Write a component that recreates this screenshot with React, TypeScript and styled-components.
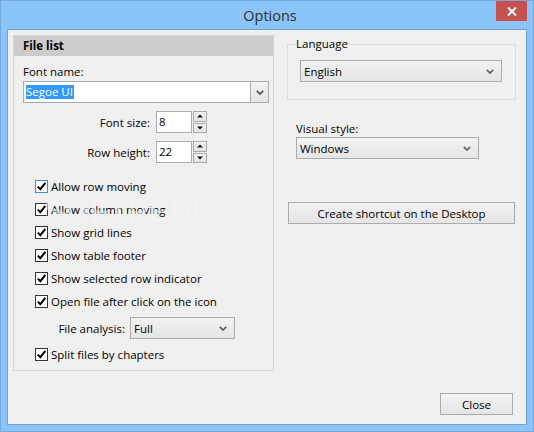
import React from 'react'
import styled, { createGlobalStyle } from 'styled-components'

const GlobalStyle = createGlobalStyle`
  html, body {
    margin: 0;
    padding: 0;
    background: #8bc5f7;
  }
  body {
    font-family: "Segoe UI", "Open Sans", "Noto Sans", sans-serif;
    font-size: 11.5px;
    color: #000;
  }
  * {
    box-sizing: border-box;
  }
`

const Window = styled.div`
  width: 534px;
  height: 432px;
  background: #8bc5f7;
  border: 1px solid #73a9dc;
  padding: 0 6px 6px 6px;
  display: flex;
  flex-direction: column;
`

const TitleBar = styled.div`
  height: 28px;
  display: grid;
  grid-template-columns: 1fr auto 1fr;
  margin-right: -6px;
`

const Title = styled.div`
  grid-column: 2;
  line-height: 29px;
  font-size: 14.5px;
  color: #2e2e2e;
`

const CloseBox = styled.div`
  grid-column: 3;
  justify-self: end;
  width: 31px;
  height: 20px;
  margin-right: 6px;
  background: #c75050;
  display: flex;
  align-items: center;
  justify-content: center;
`

const Client = styled.div`
  flex: 1;
  border: 1px solid #6fa3d3;
  background: #f0f0f0;
  display: flex;
  flex-direction: column;
`

const Main = styled.div`
  display: flex;
  gap: 13px;
  padding: 5px 0 0 5px;
`

const Panel = styled.div`
  position: relative;
  width: 261px;
  height: 336px;
  border: 1px solid #d5d5d5;
  display: flex;
  flex-direction: column;
`

const PanelHeader = styled.div`
  height: 20px;
  line-height: 20px;
  padding-left: 9px;
  background: #cccccc;
  font-weight: 700;
`

const PanelBody = styled.div`
  padding: 8px 4px 0 9px;
  display: flex;
  flex-direction: column;
`

const Label = styled.div<{ $indent?: number; $top?: number }>`
  line-height: 15px;
  padding-left: ${(p) => p.$indent ?? 0}px;
  margin-top: ${(p) => p.$top ?? 0}px;
`

const EditCombo = styled.div`
  margin-top: 2px;
  height: 22px;
  border: 1px solid #a3acb9;
  background: #fff;
  display: flex;
  align-items: stretch;
`

const EditText = styled.div`
  flex: 1;
  display: flex;
  align-items: center;
  padding-left: 2px;
`

const Selected = styled.span`
  background: #3399ff;
  color: #fff;
  line-height: 14px;
  padding-right: 1px;
`

const DropButton = styled.div`
  width: 19px;
  margin: -1px -1px -1px 0;
  border: 1px solid #acacac;
  background: linear-gradient(#f2f2f2, #e4e4e4);
  display: flex;
  align-items: center;
  justify-content: center;
`

const SpinRow = styled.div`
  margin-top: 8px;
  height: 22px;
  display: flex;
  align-items: center;
`

const SpinLabel = styled.div`
  width: 127px;
  text-align: right;
  margin-right: 6px;
`

const SpinInput = styled.div`
  width: 36px;
  height: 22px;
  border: 1px solid #abadb3;
  background: #fff;
  padding-left: 2px;
  line-height: 19px;
`

const Spinner = styled.div`
  margin-left: 1px;
  width: 14px;
  height: 22px;
  display: flex;
  flex-direction: column;
  gap: 1px;
`

const SpinButton = styled.div`
  flex: 1;
  border: 1px solid #acacac;
  background: linear-gradient(#f2f2f2, #e4e4e4);
  display: flex;
  align-items: center;
  justify-content: center;
`

const CheckList = styled.div`
  margin-top: 12px;
  display: flex;
  flex-direction: column;
`

const CheckRow = styled.div<{ $top?: number }>`
  height: 23px;
  margin-top: ${(p) => p.$top ?? 0}px;
  padding-left: 12px;
  display: flex;
  align-items: center;
  gap: 3px;
`

const Box = styled.div<{ $hot?: boolean }>`
  width: 13px;
  height: 13px;
  border: 1px solid ${(p) => (p.$hot ? '#3c8fe0' : '#333333')};
  background: #fff;
  display: flex;
  align-items: center;
  justify-content: center;
`

const AnalysisRow = styled.div`
  margin-top: 4px;
  height: 22px;
  display: flex;
  align-items: center;
`

const AnalysisLabel = styled.div`
  width: 102px;
  text-align: right;
  margin-right: 5px;
`

const Select = styled.div<{ $w: number; $left?: number; $top?: number }>`
  width: ${(p) => p.$w}px;
  height: 22px;
  margin-left: ${(p) => p.$left ?? 0}px;
  margin-top: ${(p) => p.$top ?? 0}px;
  border: 1px solid #acacac;
  background: linear-gradient(#f2f2f2, #e5e5e5);
  padding: 0 7px 0 3px;
  display: flex;
  align-items: center;
  justify-content: space-between;
  flex-shrink: 0;
`

const Watermark = styled.div`
  position: absolute;
  left: 30px;
  top: 155px;
  font-family: "Liberation Sans", Arial, sans-serif;
  font-weight: 700;
  font-size: 32px;
  letter-spacing: -0.5px;
  color: rgba(255, 255, 255, 0.55);
  text-shadow: 0 0 1px rgba(0, 0, 0, 0.05);
  pointer-events: none;

  sup {
    font-size: 10px;
    vertical-align: 22px;
    margin-left: 2px;
  }
`

const RightColumn = styled.div`
  width: 229px;
  display: flex;
  flex-direction: column;
`

const Group = styled.fieldset`
  margin: 1px 0 0 0;
  padding: 0 0 17px 12px;
  border: 1px solid #dcdcdc;
  min-width: 0;

  legend {
    margin-left: -5px;
    padding: 0 1px;
    line-height: 16px;
  }
`

const Button = styled.div<{ $w: number; $left?: number; $top?: number }>`
  width: ${(p) => p.$w}px;
  height: 22px;
  margin-left: ${(p) => p.$left ?? 0}px;
  margin-top: ${(p) => p.$top ?? 0}px;
  border: 1px solid #acacac;
  background: linear-gradient(#f2f2f2, #e5e5e5);
  display: flex;
  align-items: center;
  justify-content: center;
`

const Footer = styled.div`
  margin-top: auto;
  padding: 0 13px 9px 0;
  display: flex;
  justify-content: flex-end;
`

const Chevron = ({ color = '#606060' }: { color?: string }) => (
  <svg width="8" height="5" viewBox="0 0 8 5">
    <path d="M0.8 0.8 L4 4 L7.2 0.8" fill="none" stroke={color} strokeWidth="1.7" />
  </svg>
)

const Arrow = ({ up }: { up?: boolean }) => (
  <svg width="6" height="4" viewBox="0 0 6 4">
    <path d={up ? 'M0 3.5 L3 0.5 L6 3.5 Z' : 'M0 0.5 L3 3.5 L6 0.5 Z'} fill="#111" />
  </svg>
)

const Check = () => (
  <svg width="11" height="11" viewBox="0 0 11 11">
    <path d="M1.8 5.6 L4.3 8.2 L9.4 1.8" fill="none" stroke="#000" strokeWidth="2" />
  </svg>
)

const options = [
  'Allow row moving',
  'Allow column moving',
  'Show grid lines',
  'Show table footer',
  'Show selected row indicator',
  'Open file after click on the icon',
]

export default function App() {
  return (
    <>
      <GlobalStyle />
      <Window>
        <TitleBar>
          <Title>Options</Title>
          <CloseBox>
            <svg width="10" height="9" viewBox="0 0 10 9">
              <path d="M1 0.5 L9 8.5 M9 0.5 L1 8.5" stroke="#fff" strokeWidth="2" />
            </svg>
          </CloseBox>
        </TitleBar>

        <Client>
          <Main>
            <Panel>
              <PanelHeader>File list</PanelHeader>
              <PanelBody>
                <Label>Font name:</Label>
                <EditCombo>
                  <EditText>
                    <Selected>Segoe UI</Selected>
                  </EditText>
                  <DropButton>
                    <Chevron color="#505050" />
                  </DropButton>
                </EditCombo>

                <SpinRow>
                  <SpinLabel>Font size:</SpinLabel>
                  <SpinInput>8</SpinInput>
                  <Spinner>
                    <SpinButton><Arrow up /></SpinButton>
                    <SpinButton><Arrow /></SpinButton>
                  </Spinner>
                </SpinRow>
                <SpinRow>
                  <SpinLabel>Row height:</SpinLabel>
                  <SpinInput>22</SpinInput>
                  <Spinner>
                    <SpinButton><Arrow up /></SpinButton>
                    <SpinButton><Arrow /></SpinButton>
                  </Spinner>
                </SpinRow>

                <CheckList>
                  {options.map((o, i) => (
                    <CheckRow key={o}>
                      <Box $hot={i === 0}><Check /></Box>
                      {o}
                    </CheckRow>
                  ))}
                  <AnalysisRow>
                    <AnalysisLabel>File analysis:</AnalysisLabel>
                    <Select $w={105}>
                      Full
                      <Chevron />
                    </Select>
                  </AnalysisRow>
                  <CheckRow $top={4}>
                    <Box><Check /></Box>
                    Split files by chapters
                  </CheckRow>
                </CheckList>
              </PanelBody>
              <Watermark>
                SOFTPEDIA<sup>®</sup>
              </Watermark>
            </Panel>

            <RightColumn>
              <Group>
                <legend>Language</legend>
                <Select $w={202} $top={8}>
                  English
                  <Chevron />
                </Select>
              </Group>

              <Label $indent={9} $top={21}>Visual style:</Label>
              <Select $w={183} $left={9} $top={1}>
                Windows
                <Chevron />
              </Select>

              <Button $w={227} $left={1} $top={43}>
                Create shortcut on the Desktop
              </Button>
            </RightColumn>
          </Main>

          <Footer>
            <Button $w={73}>Close</Button>
          </Footer>
        </Client>
      </Window>
    </>
  )
}
